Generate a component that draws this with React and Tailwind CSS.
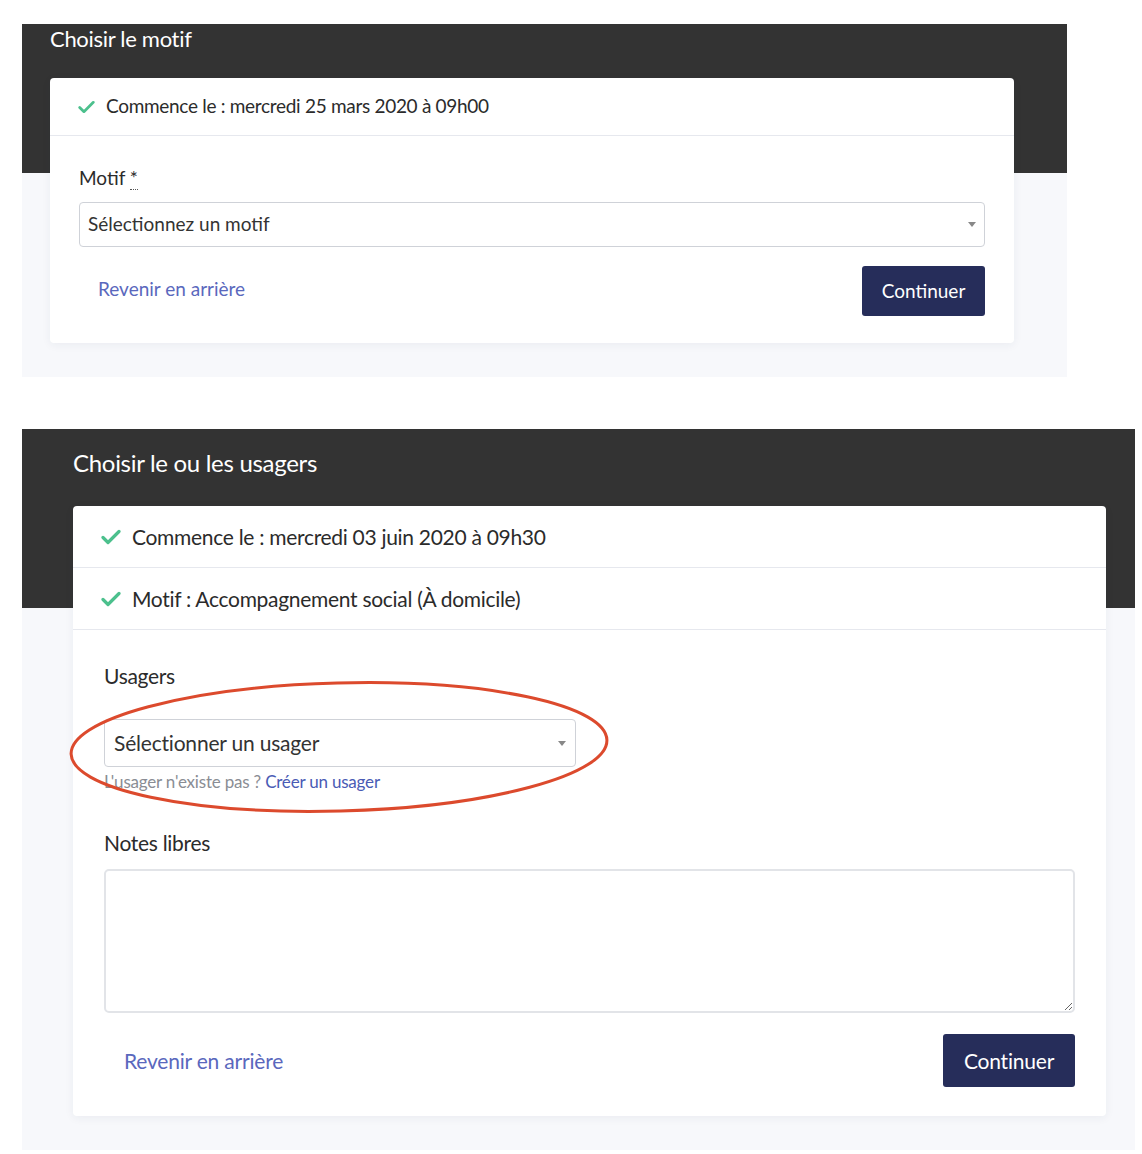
import React from 'react';

const font = { fontFamily: 'Lato, "Open Sans", sans-serif' };

const Check = ({ className }) => (
  <svg viewBox="0 0 20 16" className={className} fill="none">
    <path d="M2 8.5l5 5L18 2.5" stroke="#4cc08d" strokeWidth="3.2" strokeLinecap="round" strokeLinejoin="round" />
  </svg>
);

const Caret = () => (
  <span className="border-x-[4.5px] border-t-[5px] border-x-transparent border-t-[#888]" />
);

const DoneRow = ({ children, big }) => (
  <div
    className={
      big
        ? 'flex items-center gap-[11px] px-7 h-[62px] border-b border-[#e6e8ee] text-[21px] text-[#2b2b2b]'
        : 'flex items-center gap-[11px] px-7 h-[58px] border-b border-[#e6e8ee] text-[19px] text-[#2b2b2b]'
    }
  >
    <Check className={big ? 'w-[20px] h-[16px]' : 'w-[17px] h-[14px]'} />
    <span className="tracking-[-0.3px]">{children}</span>
  </div>
);

const MotifStep = () => (
  <div className="ml-[22px] mt-[24px] w-[1045px] h-[353px] bg-[linear-gradient(to_bottom,#333333_149px,#f7f8fb_149px)]">
    <h2 className="pl-7 pt-[1px] text-[22px] leading-[28px] text-white tracking-[-0.3px]">Choisir le motif</h2>
    <div className="ml-7 mt-[25px] w-[964px] bg-white rounded shadow-[0_2px_10px_rgba(40,50,90,0.06)]">
      <DoneRow>Commence le : mercredi 25 mars 2020 à 09h00</DoneRow>
      <div className="px-[29px] pt-[30px] pb-[27px]">
        <label className="block text-[19px] leading-6 text-[#2b2b2b]">
          Motif <abbr className="no-underline border-b border-dotted border-[#555]">*</abbr>
        </label>
        <div className="mt-[12px] h-[45px] w-[906px] flex items-center justify-between px-[8px] border border-[#cfd2d8] rounded-[4px]">
          <span className="text-[19px] text-[#333]">Sélectionnez un motif</span>
          <Caret />
        </div>
        <div className="mt-[19px] w-[906px] flex items-center justify-between">
          <a className="pl-[19px] -mt-[4px] text-[19px] text-[#5a68bd]">Revenir en arrière</a>
          <button className="h-[50px] w-[123px] rounded-[3px] bg-[#262d5a] text-white text-[19px]">Continuer</button>
        </div>
      </div>
    </div>
  </div>
);

const UsagersStep = () => (
  <div className="ml-[22px] mt-[52px] w-[1113px] h-[721px] bg-[linear-gradient(to_bottom,#333333_179px,#f7f8fb_179px)]">
    <h2 className="pl-[51px] pt-[19px] text-[24px] leading-[30px] text-white tracking-[-0.3px]">Choisir le ou les usagers</h2>
    <div className="ml-[51px] mt-[28px] w-[1033px] bg-white rounded shadow-[0_2px_10px_rgba(40,50,90,0.06)]">
      <DoneRow big>Commence le : mercredi 03 juin 2020 à 09h30</DoneRow>
      <DoneRow big>Motif : Accompagnement social (À domicile)</DoneRow>
      <div className="px-[31px] pt-[32px] pb-[29px]">
        <label className="block text-[21px] leading-7 text-[#2b2b2b] tracking-[-0.3px]">Usagers</label>
        <div className="relative mt-[29px]">
          <div className="h-[48px] w-[472px] flex items-center justify-between px-[9px] border border-[#cfd2d8] rounded-[4px]">
            <span className="text-[21px] text-[#333] tracking-[-0.2px]">Sélectionner un usager</span>
            <Caret />
          </div>
          <p className="mt-[5px] text-[17px] leading-5 text-[#8a8d94] tracking-[-0.2px]">
            L'usager n'existe pas ? <a className="text-[#4a5bb5]">Créer un usager</a>
          </p>
          <svg className="absolute left-[-35px] top-[-38px] w-[545px] h-[136px] overflow-visible pointer-events-none" viewBox="0 0 545 136" fill="none">
            <ellipse cx="270" cy="66" rx="268" ry="64" transform="rotate(-1.5 270 66)" stroke="#dc4a2d" strokeWidth="3" />
          </svg>
        </div>
        <label className="block mt-[37px] text-[21px] leading-7 text-[#2b2b2b] tracking-[-0.3px]">Notes libres</label>
        <textarea className="block mt-[12px] w-[971px] h-[144px] border-2 border-[#e2e4e8] rounded-[5px] resize-y outline-none" />
        <div className="mt-[21px] w-[971px] flex items-center justify-between">
          <a className="pl-[20px] text-[21px] text-[#5a68bd] tracking-[-0.2px]">Revenir en arrière</a>
          <button className="h-[53px] w-[132px] rounded-[3px] bg-[#262d5a] text-white text-[21px] tracking-[-0.2px]">Continuer</button>
        </div>
      </div>
    </div>
  </div>
);

export default function App() {
  return (
    <div className="w-[1142px] min-h-[1154px] bg-white" style={font}>
      <MotifStep />
      <UsagersStep />
    </div>
  );
}
